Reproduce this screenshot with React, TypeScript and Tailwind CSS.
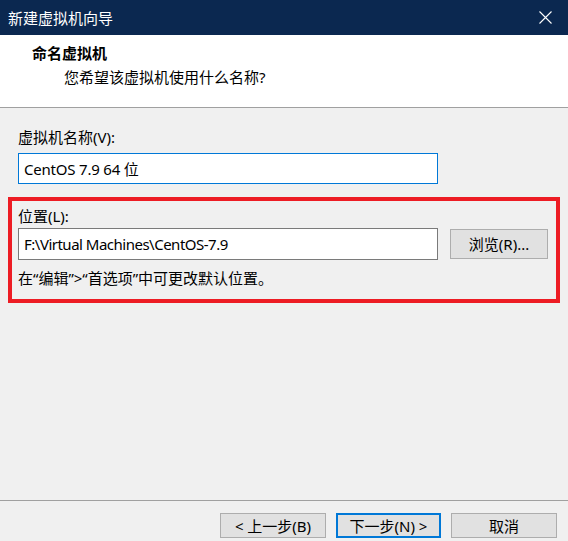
const FONT = {
  fontFamily: '"Segoe UI", "Noto Sans", "Noto Sans CJK SC", sans-serif',
};

function CloseIcon() {
  return (
    <svg width="13" height="13" viewBox="0 0 13 13" fill="none">
      <path d="M0.5 0.5 L12.5 12.5 M12.5 0.5 L0.5 12.5" stroke="#ffffff" strokeWidth="1.1" />
    </svg>
  );
}

export default function App() {
  return (
    <div
      className="w-[568px] h-[541px] flex flex-col bg-[#f0f0f0] text-[15px] leading-[20px] text-black overflow-hidden"
      style={FONT}
    >
      {/* Title bar */}
      <div className="h-[35px] flex items-center justify-between bg-[#0b2850] pl-[8px] pr-[16px]">
        <span className="text-white">新建虚拟机向导</span>
        <CloseIcon />
      </div>

      {/* Header */}
      <div className="h-[73px] bg-white border-b border-[#a0a0a0] pt-[8px]">
        <div className="pl-[32px] font-bold">命名虚拟机</div>
        <div className="pl-[64px] mt-[4px]">您希望该虚拟机使用什么名称?</div>
      </div>

      {/* Body */}
      <div className="flex-1 flex flex-col px-[18px] pt-[19px]">
        <label>虚拟机名称(V):</label>
        <div className="mt-[6px] w-[420px] h-[31px] flex items-center bg-white border border-[#0078d7] px-[5px] tracking-[-0.2px]">
          CentOS 7.9 64 位
        </div>

        {/* red highlight */}
        <div className="mt-[13px] -mx-[10px] border-[4px] border-[#ed1c24] px-[6px] pt-[5px] pb-[11px]">
          <label>位置(L):</label>
          <div className="mt-[2px] flex items-center gap-[12px]">
            <div className="w-[420px] h-[32px] flex items-center bg-white border border-[#7a7a7a] px-[5px] tracking-[-0.5px]">
              F:\Virtual Machines\CentOS-7.9
            </div>
            <button className="w-[98px] h-[30px] flex items-center justify-center bg-[#e1e1e1] border border-[#adadad]">
              浏览(R)...
            </button>
          </div>
          <p className="mt-[8px]">在“编辑”&gt;“首选项”中可更改默认位置。</p>
        </div>
      </div>

      {/* Footer */}
      <div className="h-[41px] border-t border-[#a0a0a0] flex justify-end gap-[10px] pr-[11px] pt-[12px]">
        <button className="w-[106px] h-[25px] flex items-center justify-center bg-[#e1e1e1] border border-[#adadad]">
          &lt; 上一步(B)
        </button>
        <button className="w-[105px] h-[25px] flex items-center justify-center bg-[#e1e1e1] border-2 border-[#0078d7]">
          下一步(N) &gt;
        </button>
        <button className="w-[106px] h-[25px] flex items-center justify-center bg-[#e1e1e1] border border-[#adadad]">
          取消
        </button>
      </div>
    </div>
  );
}
